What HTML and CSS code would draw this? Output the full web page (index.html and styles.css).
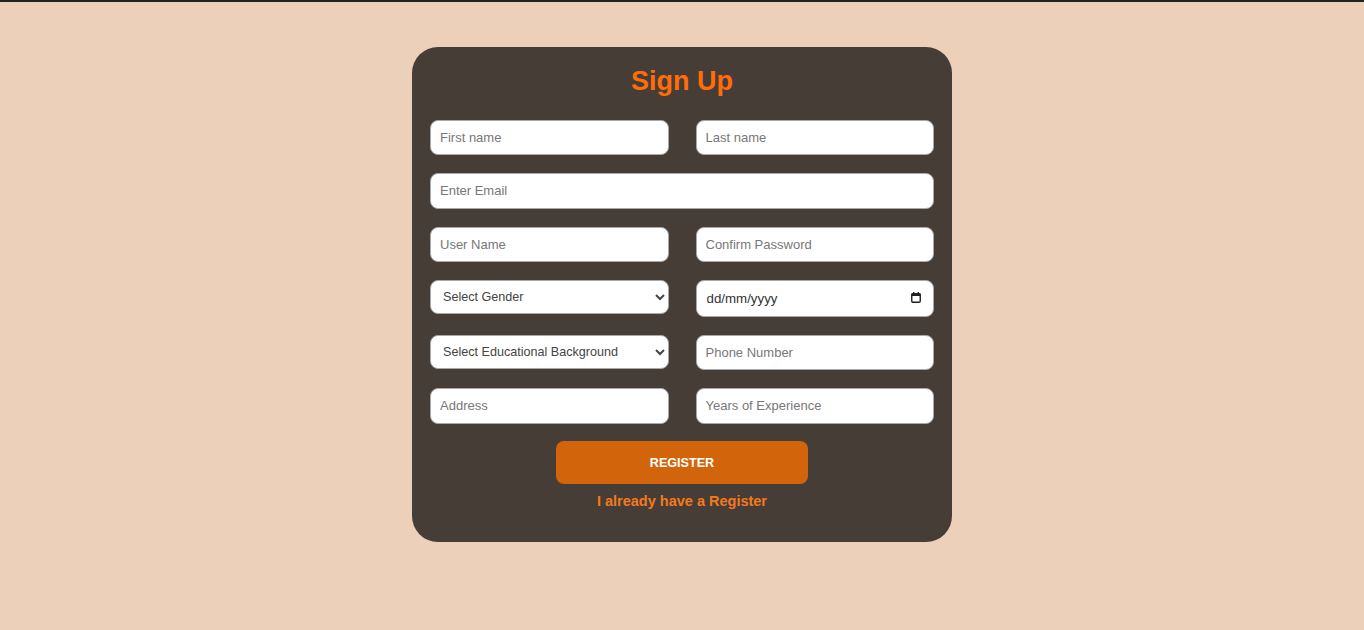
FILE: index.html
```html
<!DOCTYPE html>
<html lang="en-GB">
<head>
<meta charset="utf-8">
<title>Sign Up</title>
<link rel="stylesheet" href="styles.css">
</head>
<body>
<div class="topbar"></div>
<main class="page">
  <form class="card">
    <h1 class="title">Sign Up</h1>
    <div class="grid">
      <input class="field" type="text" placeholder="First name">
      <input class="field" type="text" placeholder="Last name">
      <input class="field wide" type="email" placeholder="Enter Email">
      <input class="field" type="text" placeholder="User Name">
      <input class="field" type="password" placeholder="Confirm Password">
      <select class="field select">
        <option>Select Gender</option>
        <option>Male</option>
        <option>Female</option>
      </select>
      <div class="datewrap">
        <input class="field date" type="text" placeholder="dd/mm/yyyy" aria-label="Date of birth">
        <svg class="cal" width="10" height="11" viewBox="0 0 10 11" aria-hidden="true">
          <rect x="0.75" y="2" width="8.5" height="8.25" rx="1.2" fill="none" stroke="#1f1f1f" stroke-width="1.4"/>
          <rect x="0.2" y="1.3" width="9.6" height="2.8" rx="1" fill="#1f1f1f"/>
          <rect x="2" y="0" width="1.4" height="2" fill="#1f1f1f"/>
          <rect x="6.6" y="0" width="1.4" height="2" fill="#1f1f1f"/>
        </svg>
      </div>
      <select class="field select">
        <option>Select Educational Background</option>
        <option>High School</option>
        <option>Bachelor</option>
      </select>
      <input class="field" type="tel" placeholder="Phone Number">
      <input class="field" type="text" placeholder="Address">
      <input class="field" type="text" placeholder="Years of Experience">
    </div>
    <button class="btn" type="button">REGISTER</button>
    <a class="link" href="#">I already have a Register</a>
  </form>
</main>
</body>
</html>
```
FILE: styles.css
```css
* { box-sizing: border-box; }
html, body {
  margin: 0;
  padding: 0;
  background: #edd0b9;
  font-family: "Liberation Sans", Arial, sans-serif;
}
.topbar {
  height: 2px;
  background: #222222;
}
.page {
  display: flex;
  justify-content: center;
  padding-top: 45px;
}
.card {
  width: 540px;
  background: #463d37;
  border-radius: 26px;
  padding: 19px 18px 32px;
  display: flex;
  flex-direction: column;
  align-items: center;
}
.title {
  margin: 0 0 24px;
  font-size: 27px;
  line-height: 30px;
  font-weight: bold;
  color: #ff6d0a;
}
.grid {
  width: 100%;
  display: grid;
  grid-template-columns: 1fr 1fr;
  column-gap: 27px;
  row-gap: 18px;
  align-items: start;
}
.wide { grid-column: 1 / 3; }
.field {
  width: 100%;
  height: 35.33px;
  border: 1px solid #a9a9a9;
  border-radius: 8px;
  background: #ffffff;
  padding: 0 9px;
  font-family: "Liberation Sans", Arial, sans-serif;
  font-size: 13px;
  color: #333;
  outline: none;
}
.field::placeholder { color: #777; }
.select {
  height: 34px;
  padding: 0 7px 0 8px;
  font-size: 12.6px;
  color: #444;
}
.datewrap {
  position: relative;
}
.date {
  display: block;
  height: 37px;
  font-size: 13.3px;
  padding: 0 32px 0 10px;
}
.date::placeholder { color: #333; }
.cal {
  position: absolute;
  right: 13px;
  top: 12px;
  pointer-events: none;
}
.btn {
  margin-top: 17.5px;
  width: 252px;
  height: 43px;
  border: none;
  border-radius: 8px;
  background: #d2640c;
  color: #fff;
  font-family: "Liberation Sans", Arial, sans-serif;
  font-size: 12.6px;
  font-weight: bold;
  cursor: pointer;
}
.link {
  margin-top: 9px;
  font-size: 14.5px;
  line-height: 17px;
  font-weight: bold;
  color: #f47a1c;
  text-decoration: none;
}
```
